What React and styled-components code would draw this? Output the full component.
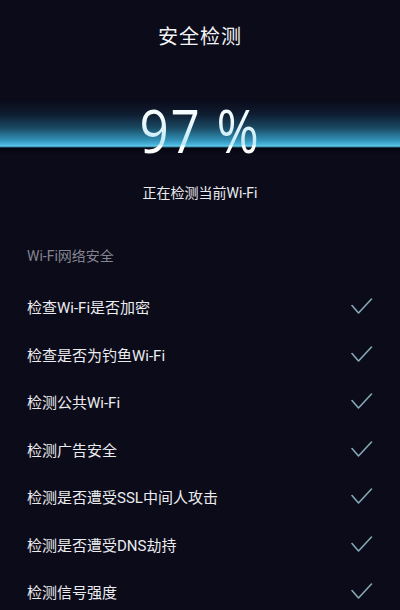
import React from "react";
import styled, { createGlobalStyle } from "styled-components";

const Global = createGlobalStyle`
  html, body { margin: 0; padding: 0; background: #0b0b19; }
  body { font-family: "Roboto", "Noto Sans CJK SC", sans-serif; }
`;

const Screen = styled.div`
  width: 400px;
  height: 610px;
  overflow: hidden;
  background: #0b0b19;
  display: flex;
  flex-direction: column;
  font-family: "Roboto", "Noto Sans CJK SC", sans-serif;
`;

const Title = styled.h1`
  margin: 23px 0 0;
  font-size: 20px;
  line-height: 28px;
  font-weight: 400;
  color: #f2f2f5;
  text-align: center;
  letter-spacing: 1px;
`;

const Hero = styled.div`
  margin-top: 39px;
  height: 80px;
  display: flex;
  justify-content: center;
  background: linear-gradient(
    to bottom,
    rgba(11, 11, 25, 0) 0px,
    rgba(11, 11, 25, 0) 10px,
    #0f1c30 24px,
    #1a4a63 38px,
    #3190b6 50px,
    #4cb8df 55px,
    #6ad0ef 56px,
    #2a6f8c 57px,
    #04050d 58px,
    #070814 61px,
    rgba(11, 11, 25, 0) 64px
  );
`;

const Percent = styled.div`
  font-family: "Open Sans", sans-serif;
  font-weight: 500;
  font-size: 61px;
  line-height: 80px;
  letter-spacing: 2px;
  transform: scaleX(0.84);
  background: linear-gradient(to bottom, #ffffff 0%, #f2fbfe 35%, #bfe9f7 68%, #ffffff 70%, #ffffff 100%);
  -webkit-background-clip: text;
  background-clip: text;
  color: transparent;
`;

const Subtitle = styled.div`
  margin-top: 13px;
  font-size: 14px;
  line-height: 20px;
  color: #ececf0;
  text-align: center;
`;

const Section = styled.div`
  margin-top: 43px;
  padding: 0 27px;
  display: flex;
  flex-direction: column;
`;

const SectionHeader = styled.div`
  font-size: 14px;
  line-height: 20px;
  color: #84848f;
  margin-bottom: 17px;
`;

const Row = styled.div`
  height: 47.5px;
  display: flex;
  align-items: center;
  justify-content: space-between;
`;

const RowLabel = styled.span`
  font-size: 15px;
  color: #ececf0;
`;

const CheckWrap = styled.span`
  display: flex;
`;

const Check = () => (
  <CheckWrap>
    <svg width="23" height="17" viewBox="0 0 23 17" fill="none">
      <polyline points="2,7.5 8.5,15 21.5,1" stroke="#86a8b6" strokeWidth="1.6" strokeLinecap="round" strokeLinejoin="round" />
    </svg>
  </CheckWrap>
);

const items = [
  "检查Wi-Fi是否加密",
  "检查是否为钓鱼Wi-Fi",
  "检测公共Wi-Fi",
  "检测广告安全",
  "检测是否遭受SSL中间人攻击",
  "检测是否遭受DNS劫持",
  "检测信号强度",
];

export default function App() {
  return (
    <>
      <Global />
      <Screen>
        <Title>安全检测</Title>
        <Hero>
          <Percent>97 %</Percent>
        </Hero>
        <Subtitle>正在检测当前Wi-Fi</Subtitle>
        <Section>
          <SectionHeader>Wi-Fi网络安全</SectionHeader>
          {items.map((t) => (
            <Row key={t}>
              <RowLabel>{t}</RowLabel>
              <Check />
            </Row>
          ))}
        </Section>
      </Screen>
    </>
  );
}
